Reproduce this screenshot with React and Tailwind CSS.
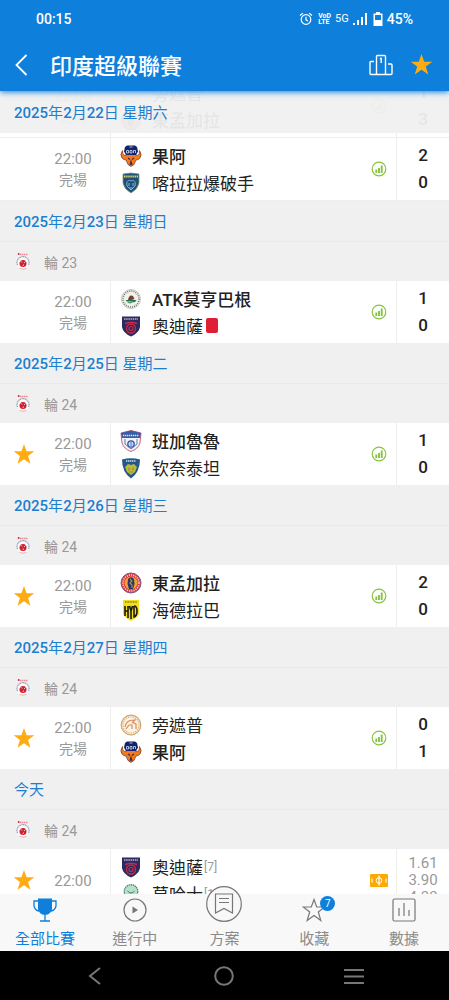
import React from 'react';

const sections = [
  {
    date: '2025年2月23日 星期日',
    round: '輪 23',
    match: {
      starred: false, time: '22:00', status: '完場',
      home: { name: 'ATK莫亨巴根', crest: 'mohun', bold: true, score: '1' },
      away: { name: '奧迪薩', crest: 'odisha', redCard: true, score: '0' },
    },
  },
  {
    date: '2025年2月25日 星期二',
    round: '輪 24',
    match: {
      starred: true, time: '22:00', status: '完場',
      home: { name: '班加魯魯', crest: 'bengaluru', bold: true, score: '1' },
      away: { name: '钦奈泰坦', crest: 'chennaiyin', score: '0' },
    },
  },
  {
    date: '2025年2月26日 星期三',
    round: '輪 24',
    match: {
      starred: true, time: '22:00', status: '完場',
      home: { name: '東孟加拉', crest: 'eastBengal', bold: true, score: '2' },
      away: { name: '海德拉巴', crest: 'hyderabad', score: '0' },
    },
  },
  {
    date: '2025年2月27日 星期四',
    round: '輪 24',
    match: {
      starred: true, time: '22:00', status: '完場',
      home: { name: '旁遮普', crest: 'punjab', score: '0' },
      away: { name: '果阿', crest: 'goa', bold: true, score: '1' },
    },
  },
  {
    date: '今天',
    round: '輪 24',
    match: {
      starred: true, time: '22:00',
      home: { name: '奧迪薩', crest: 'odisha', rank: '[7]' },
      away: { name: '莫哈士', crest: 'mohammedan', rank: '[13]' },
      odds: ['1.61', '3.90', '4.33'],
    },
  },
];

const previousMatch = {
  starred: false, time: '22:00', status: '完場',
  home: { name: '旁遮普', crest: 'punjab', score: '1' },
  away: { name: '東孟加拉', crest: 'eastBengal', bold: true, score: '3' },
};

const firstMatch = {
  starred: false, time: '22:00', status: '完場',
  home: { name: '果阿', crest: 'goa', bold: true, score: '2' },
  away: { name: '喀拉拉爆破手', crest: 'kerala', score: '0' },
};

const shield = 'M3 2Q11 0 19 2V11Q18 17 11 21Q4 17 3 11Z';

const crests = {
  goa: (
    <>
      <path d="M2.500 5.500Q-.5 10 2 13Q3.500 15 6 15L8 19.500L11 21.500L14 19.500L16 15Q18.500 15 20 13Q22.500 10 19.500 5.500Q20 9 17.500 10.500L14.500 9.500H7.500L4.500 10.500Q2 9 2.500 5.500Z" fill="#f47a20" stroke="#6b3a22" strokeWidth=".7" />
      <path d="M5 2L7 .5H15L17 2L18 6.500L16 10H6L4 6.500Z" fill="#12226b" />
      <path d="M9.500 2H12.500M6.500 5.500H8.500V8H6.500ZM10 5.500H12V8H10ZM13.500 8V5.500H15.500V8" fill="none" stroke="#d9e0f5" strokeWidth=".8" />
      <path d="M8 13L10 14.500M14 13L12 14.500M10 20L11 16.500L12 20" fill="none" stroke="#3c2c4c" strokeWidth="1.200" />
    </>
  ),
  kerala: (
    <>
      <path d={shield} fill="#1c4f7c" stroke="#8b9a63" strokeWidth=".8" />
      <path d="M4 4.500H18" stroke="#d7cf6a" strokeWidth="2" strokeDasharray="1.500 .6" />
      <path d="M7 14C6 8 9 8 11 9C13 8 16 8 15 14L11 18ZM9 11V14M13 11V14M9 16H13" fill="none" stroke="#8fb6c9" strokeWidth="1" />
    </>
  ),
  mohun: (
    <>
      <circle cx="11" cy="11" r="9.500" fill="#f3f1ea" stroke="#aab2aa" strokeWidth=".7" />
      <circle cx="11" cy="11" r="8" fill="none" stroke="#6c7a70" strokeWidth="1.500" strokeDasharray="1 1.100" />
      <path d="M5.500 12H16.500Q14 16 8 15Z" fill="#1d7a50" />
      <path d="M8 12Q9 6 13 8L14.500 11L10 12.500Z" fill="#7a3d33" />
      <path d="M6 14Q11 13 15 15" stroke="#e9eee4" strokeWidth=".8" fill="none" />
    </>
  ),
  odisha: (
    <>
      <path d="M2 1.500H20V12Q19 18 11 21.500Q3 18 2 12Z" fill="#2d2a60" />
      <path d="M4 4H18" stroke="#b8b5d2" strokeWidth="1.600" strokeDasharray="1.500 .7" />
      <circle cx="11" cy="13.500" r="4.500" fill="none" stroke="#c92a48" strokeWidth="1.300" />
      <circle cx="11" cy="13.500" r="2" fill="none" stroke="#c92a48" strokeWidth="1.200" />
      <path d="M5 8.500L9 7.500H13L17 8.500" fill="none" stroke="#c92a48" strokeWidth="1.500" />
    </>
  ),
  bengaluru: (
    <>
      <path d="M1 3L11 .5L21 3L20 13Q18 19 11 21.500Q4 19 2 13Z" fill="#f1f3fa" stroke="#c23a50" strokeWidth=".8" />
      <path d="M1 3L11 .5L21 3L20 8H2Z" fill="#3a5da8" />
      <path d="M3 5.500H19" stroke="#dce4f6" strokeWidth="1.400" strokeDasharray="1.300 .7" />
      <circle cx="11" cy="14" r="3.200" fill="#cdd9f2" stroke="#2d56a6" strokeWidth="1.300" />
      <path d="M5 9V14L11 19L17 14V9M11 12V16" stroke="#3a5da8" strokeWidth=".8" fill="none" />
    </>
  ),
  chennaiyin: (
    <>
      <path d="M2 2.500Q11 0 20 2.500Q20 15 11 21.500Q2 15 2 2.500Z" fill="#23588a" />
      <path d="M6 4H16" stroke="#d6e2ef" strokeWidth="1.300" strokeDasharray="1.300 .6" />
      <path d="M5 10L8 7L11 8L14 7L17 10L15 15L11 18L7 15Z" fill="#bdb73c" />
      <path d="M8 11L10 12L8 13M14 11L12 12L14 13M9 15H13" stroke="#8c9a3c" strokeWidth="1" fill="none" />
    </>
  ),
  eastBengal: (
    <>
      <circle cx="11" cy="11" r="10" fill="#d63440" stroke="#7a5a86" strokeWidth="1" />
      <circle cx="11" cy="11" r="8" fill="none" stroke="#f8dcc0" strokeWidth="1.600" strokeDasharray="1.200 1" />
      <circle cx="11" cy="11" r="6.500" fill="#f1a32e" />
      <path d="M8 7Q11 3.500 14 7L14.500 12L13 17H9L7.500 12Z" fill="#25386c" />
      <path d="M10 7L12 9L10 11L12 13V16" stroke="#c98b4b" strokeWidth="1.100" fill="none" />
    </>
  ),
  hyderabad: (
    <>
      <path d="M3 1H19V15Q17 19 11 22Q5 19 3 15Z" fill="#f3df20" />
      <path d="M5 3H17" stroke="#4c460f" strokeWidth="1.200" strokeDasharray="1 .6" />
      <path d="M5 7V17M8 7V19M5 12H8M9.500 7L11 12L12.500 7M11 12V20M14 7V18Q17 17 17 12Q17 7 14 7" stroke="#1a1a12" strokeWidth="1.600" fill="none" />
    </>
  ),
  punjab: (
    <>
      <circle cx="11" cy="11" r="9.800" fill="#fbf3e6" stroke="#d0a56a" strokeWidth="1.200" />
      <circle cx="11" cy="11" r="8" fill="none" stroke="#d8b17b" strokeWidth="1.200" strokeDasharray="1.300 1" />
      <path d="M5 13Q6 8 10 6.500L15 6L12.500 8.500L16 10V15M6 15L9 11H12V15" fill="none" stroke="#dd8a5c" strokeWidth="1.200" />
    </>
  ),
  mohammedan: (
    <>
      <circle cx="11" cy="8.500" r="6.800" fill="#b4e2cb" stroke="#4b7a67" strokeWidth="1.200" strokeDasharray="1.500 .6" />
      <path d="M7.500 8Q11 12 14.500 8" stroke="#3f7a63" strokeWidth="1" fill="none" />
      <path d="M5 14V21H17V14" fill="#d2eee0" stroke="#7aa593" strokeWidth=".8" />
    </>
  ),
};

function Crest({ id }) {
  return (
    <svg viewBox="0 0 22 22" className="size-[22px] shrink-0" aria-hidden="true">
      {crests[id]}
    </svg>
  );
}

function Star({ className }) {
  return (
    <svg viewBox="0 0 24 24" className={className} aria-hidden="true">
      <path d="M12 1L14.800 9H23.200L16.500 14.200L19 22.500L12 17.600L5 22.500L7.500 14.200L.8 9H9.200Z" fill="#ffac13" />
    </svg>
  );
}

function LeagueLogo() {
  return (
    <svg viewBox="0 0 16 20" className="w-4 h-5" aria-hidden="true">
      <path d="M5 2.500H12.500" stroke="#e58a97" strokeWidth="1.300" strokeDasharray="1.500 .5" />
      <circle cx="3.700" cy="2" r="1" fill="#d8283d" />
      <circle cx="8" cy="11" r="6" fill="#fafafa" />
      <path d="M2.500 13A6 6 0 1 1 13.500 13" fill="none" stroke="#8a92ad" strokeWidth="1.100" strokeDasharray="1.200 .5" />
      <circle cx="8" cy="11.500" r="3.500" fill="#cf2231" />
      <path d="M5.500 9L7 10.500M10.500 9.500L9 11M8 14L8.500 12.500" stroke="#f6d5d8" strokeWidth=".9" />
      <path d="M4.500 16.500Q8 18 11.500 16.500" stroke="#ecb3ba" fill="none" />
    </svg>
  );
}

function Team({ team }) {
  return (
    <div className="flex items-center h-[27px]">
      <Crest id={team.crest} />
      <span className={team.bold ? 'ml-[10px] pt-[3px] text-[17px] leading-6 font-medium' : 'ml-[10px] pt-[3px] text-[17px] leading-6'}>{team.name}</span>
      {team.rank && <span className="ml-px text-xs text-[#999]">{team.rank}</span>}
      {team.redCard && <span className="ml-[3px] w-3 h-[15px] rounded-xs bg-[#df1f35]" />}
    </div>
  );
}

function StatsIcon() {
  return (
    <svg viewBox="0 0 16 16" className="size-4" aria-hidden="true">
      <circle cx="8" cy="8" r="6.800" fill="none" stroke="#86c440" strokeWidth="1.200" />
      <path d="M5.300 8.500V12M8 7V12M10.700 4.500V12" stroke="#86c440" strokeWidth="1.900" />
    </svg>
  );
}

function PitchIcon() {
  return (
    <svg viewBox="0 0 18 13" className="w-[18px] h-[13px]" aria-hidden="true">
      <rect width="18" height="13" rx="1" fill="#ffa800" />
      <path d="M9 1.500V11.500M2 4.500V8.500M16 4.500V8.500" stroke="#fff" strokeWidth="1.200" />
      <circle cx="9" cy="6.500" r="2.800" fill="none" stroke="#fff" />
    </svg>
  );
}

// digits are set heavier than the characters around them
function DayLabel({ text }) {
  return (
    <span>
      {text.split(/(\d+)/).map((part, i) => (
        <span key={i} className={/\d/.test(part) ? 'font-medium' : 'font-normal'}>{part}</span>
      ))}
    </span>
  );
}

function MatchRow({ match }) {
  const { home, away, odds } = match;
  return (
    <div className="flex h-[62px] bg-white text-[#222]">
      <div className="flex w-12 items-center justify-center">
        {match.starred && (
          <button type="button" aria-label="取消收藏">
            <Star className="size-[22px]" />
          </button>
        )}
      </div>
      <div className="flex w-[63px] pt-[2px] pr-3 flex-col items-center justify-center border-r border-[#eee] text-[15px] leading-[21px] text-[#999]">
        <span>{match.time}</span>
        {match.status && <span className="text-sm leading-[21px]">{match.status}</span>}
      </div>
      <div className="flex flex-1 flex-col justify-center pl-[9px]">
        <Team team={home} />
        <Team team={away} />
      </div>
      <div className="flex w-[34px] items-center justify-center">
        {odds ? <PitchIcon /> : <StatsIcon />}
      </div>
      <div className="flex w-[53px] flex-col items-center justify-center border-l border-[#eee]">
        {odds ? (
          odds.map((odd) => <span key={odd} className="text-[15px] leading-[17px] text-[#999]">{odd}</span>)
        ) : (
          <>
            <span className="text-[17px] leading-[27px] font-medium">{home.score}</span>
            <span className="text-[17px] leading-[27px] font-medium">{away.score}</span>
          </>
        )}
      </div>
    </div>
  );
}

function StatusBar() {
  return (
    <div className="flex h-[38px] items-center px-9 text-sm font-medium">
      <span>00:15</span>
      <div className="ml-auto flex items-center">
        <svg viewBox="0 0 14 14" className="size-[14px]" fill="none" stroke="#fff" strokeWidth="1.200" aria-hidden="true">
          <circle cx="7" cy="7.500" r="4.800" />
          <path d="M7 4.800V7.800L9 9M1 3.500L3.800 1.200M13 3.500L10.200 1.200" />
        </svg>
        <span className="ml-[5px] flex flex-col text-[7px] leading-[6px] font-bold">
          <span>VoD</span>
          <span>LTE</span>
        </span>
        <span className="ml-1 text-[11px] font-normal">5G</span>
        <svg viewBox="0 0 14 14" className="ml-1 size-[14px]" fill="#fff" aria-hidden="true">
          <path d="M0 11H2V13H0ZM4 8H6V13H4ZM8 5H10V13H8ZM12 1H14V13H12Z" />
        </svg>
        <svg viewBox="0 0 10 14" className="ml-[6px] w-[10px] h-[14px]" aria-hidden="true">
          <path d="M3 0H7V1.500H9.500V14H.5V1.500H3Z" fill="#fff" />
          <path d="M2 3H8V8H2Z" fill="#0e7fdb" />
        </svg>
        <span className="ml-1">45%</span>
      </div>
    </div>
  );
}

function Header() {
  return (
    <header className="relative z-20 bg-[#0e7fdb] text-white shadow-[0_1px_6px_#0e7fdb]">
      <StatusBar />
      <div className="flex h-[53px] items-center pl-[14px] pr-4">
        <button type="button" aria-label="返回">
          <svg viewBox="0 0 14 22" className="w-[14px] h-[22px]" fill="none" stroke="#fff" strokeWidth="1.800" aria-hidden="true">
            <path d="M12.500 1L2.500 11L12.500 21" />
          </svg>
        </button>
        <h1 className="ml-[22px] pt-1 text-[22px] leading-8 font-medium">印度超級聯賽</h1>
        <button type="button" aria-label="積分榜" className="ml-auto">
          <svg viewBox="0 0 24 22" className="w-6 h-[22px]" fill="none" stroke="#fff" strokeWidth="1.400" aria-hidden="true">
            <path d="M7.500 20.500V2.500Q7.500 1.500 8.500 1.500H15.500Q16.500 1.500 16.500 2.500V20.500M5 7.500H2Q1 7.500 1 8.500V19.500Q1 20.500 2 20.500H22Q23 20.500 23 19.500V11Q23 10 22 10H19" />
            <path d="M10.800 4.500H12.200V9" />
          </svg>
        </button>
        <button type="button" aria-label="收藏聯賽" className="ml-[17px]">
          <Star className="size-[23px]" />
        </button>
      </div>
    </header>
  );
}

function BottomNav() {
  return (
    <nav className="relative z-20 grid h-[57px] grid-cols-5 grid-rows-[57px] bg-[#f8f8f8] text-[15px] text-[#8a8a8a]">
      <a href="#all" className="flex flex-col items-center justify-end text-[#0e7fdb]">
        <svg viewBox="0 0 24 24" className="size-6" aria-hidden="true">
          <path d="M5 .5H19V11Q18 16.500 12 17Q6 16.500 5 11Z" fill="#0e7fdb" />
          <path d="M5 3H1V8Q2 12.500 6 13M19 3H23V8Q22 12.500 18 13M12 17V22.500M7 23H17" fill="none" stroke="#0e7fdb" strokeWidth="1.300" />
        </svg>
        <span className="mt-[5px] leading-6">全部比賽</span>
      </a>
      <a href="#live" className="flex flex-col items-center justify-end">
        <svg viewBox="0 0 24 24" className="size-6" aria-hidden="true">
          <circle cx="12" cy="12" r="11" fill="none" stroke="#777" strokeWidth="1.200" />
          <path d="M9.500 8.500L15 12L9.500 15.500Z" fill="#777" />
        </svg>
        <span className="mt-[5px] leading-6">進行中</span>
      </a>
      <a href="#plan" className="flex flex-col items-center justify-end">
        <svg viewBox="0 0 36 36" className="size-9 shrink-0" fill="none" stroke="#777" strokeWidth="1.200" aria-hidden="true">
          <circle cx="18" cy="18" r="17.300" fill="#f8f8f8" />
          <path d="M9.500 8H26.500V27L18 22.500L9.500 27ZM13 12.500H23M13 16.500H23" />
        </svg>
        <span className="mt-[5px] leading-6">方案</span>
      </a>
      <a href="#favorites" className="flex flex-col items-center justify-end">
        <span className="relative">
          <svg viewBox="0 0 24 24" className="size-6" fill="none" stroke="#777" strokeWidth="1.200" aria-hidden="true">
            <path d="M12 1.500L14.700 9H22.800L16.300 14L18.800 22.500L12 17.500L5.200 22.500L7.700 14L1.200 9H9.300Z" />
          </svg>
          <span className="absolute -top-[2px] left-[18px] size-[15px] rounded-full bg-[#0e7fdb] text-center text-[10px] leading-[15px] text-white">7</span>
        </span>
        <span className="mt-[5px] leading-6">收藏</span>
      </a>
      <a href="#data" className="flex flex-col items-center justify-end">
        <svg viewBox="0 0 24 24" className="size-6" fill="none" stroke="#777" strokeWidth="1.200" aria-hidden="true">
          <rect x="1" y="1" width="22" height="22" rx="1.500" />
          <path d="M7 10V18M12 5V18M17 12V18" />
        </svg>
        <span className="mt-[5px] leading-6">數據</span>
      </a>
    </nav>
  );
}

function SystemBar() {
  return (
    <div className="flex h-[49px] items-center justify-around bg-black px-[30px]">
      <button type="button" aria-label="系統返回">
        <svg viewBox="0 0 20 20" className="size-5" fill="none" stroke="#777" strokeWidth="2" aria-hidden="true">
          <path d="M15 2L5 10L15 18" />
        </svg>
      </button>
      <button type="button" aria-label="主畫面">
        <svg viewBox="0 0 20 20" className="size-5" fill="none" stroke="#777" strokeWidth="2" aria-hidden="true">
          <circle cx="10" cy="10" r="8.800" />
        </svg>
      </button>
      <button type="button" aria-label="最近使用">
        <svg viewBox="0 0 20 20" className="size-5" fill="none" stroke="#777" strokeWidth="2" aria-hidden="true">
          <path d="M0 4H20M0 10.500H20M0 17H20" />
        </svg>
      </button>
    </div>
  );
}

export default function App() {
  return (
    <div className="flex h-screen flex-col bg-white font-['Roboto','Noto_Sans_CJK_TC',sans-serif]">
      <Header />
      <main className="relative min-h-0 flex-1 overflow-hidden">
        <h2 className="absolute inset-x-0 top-0 z-10 flex h-[42px] items-center bg-[#f0f0f0]/95 px-[14px] pt-[3px] text-[15px] text-[#1c7fd0]">
          <DayLabel text="2025年2月22日 星期六" />
        </h2>
        <div className="-mt-4">
          <MatchRow match={previousMatch} />
          <div className="border-y border-[#eee]">
            <MatchRow match={firstMatch} />
          </div>
          {sections.map((section) => (
            <section key={section.date} className="bg-[#f0f0f0]">
              <h2 className="flex h-[41px] items-center border-b border-[#e9e9e9] px-[14px] pt-[3px] text-[15px] text-[#1c7fd0]">
                <DayLabel text={section.date} />
              </h2>
              <div className="flex h-[39px] items-center pl-[15px] text-sm text-[#999]">
                <LeagueLogo />
                <span className="ml-[13px] pt-[2px]">{section.round}</span>
              </div>
              <MatchRow match={section.match} />
            </section>
          ))}
        </div>
      </main>
      <BottomNav />
      <SystemBar />
    </div>
  );
}
